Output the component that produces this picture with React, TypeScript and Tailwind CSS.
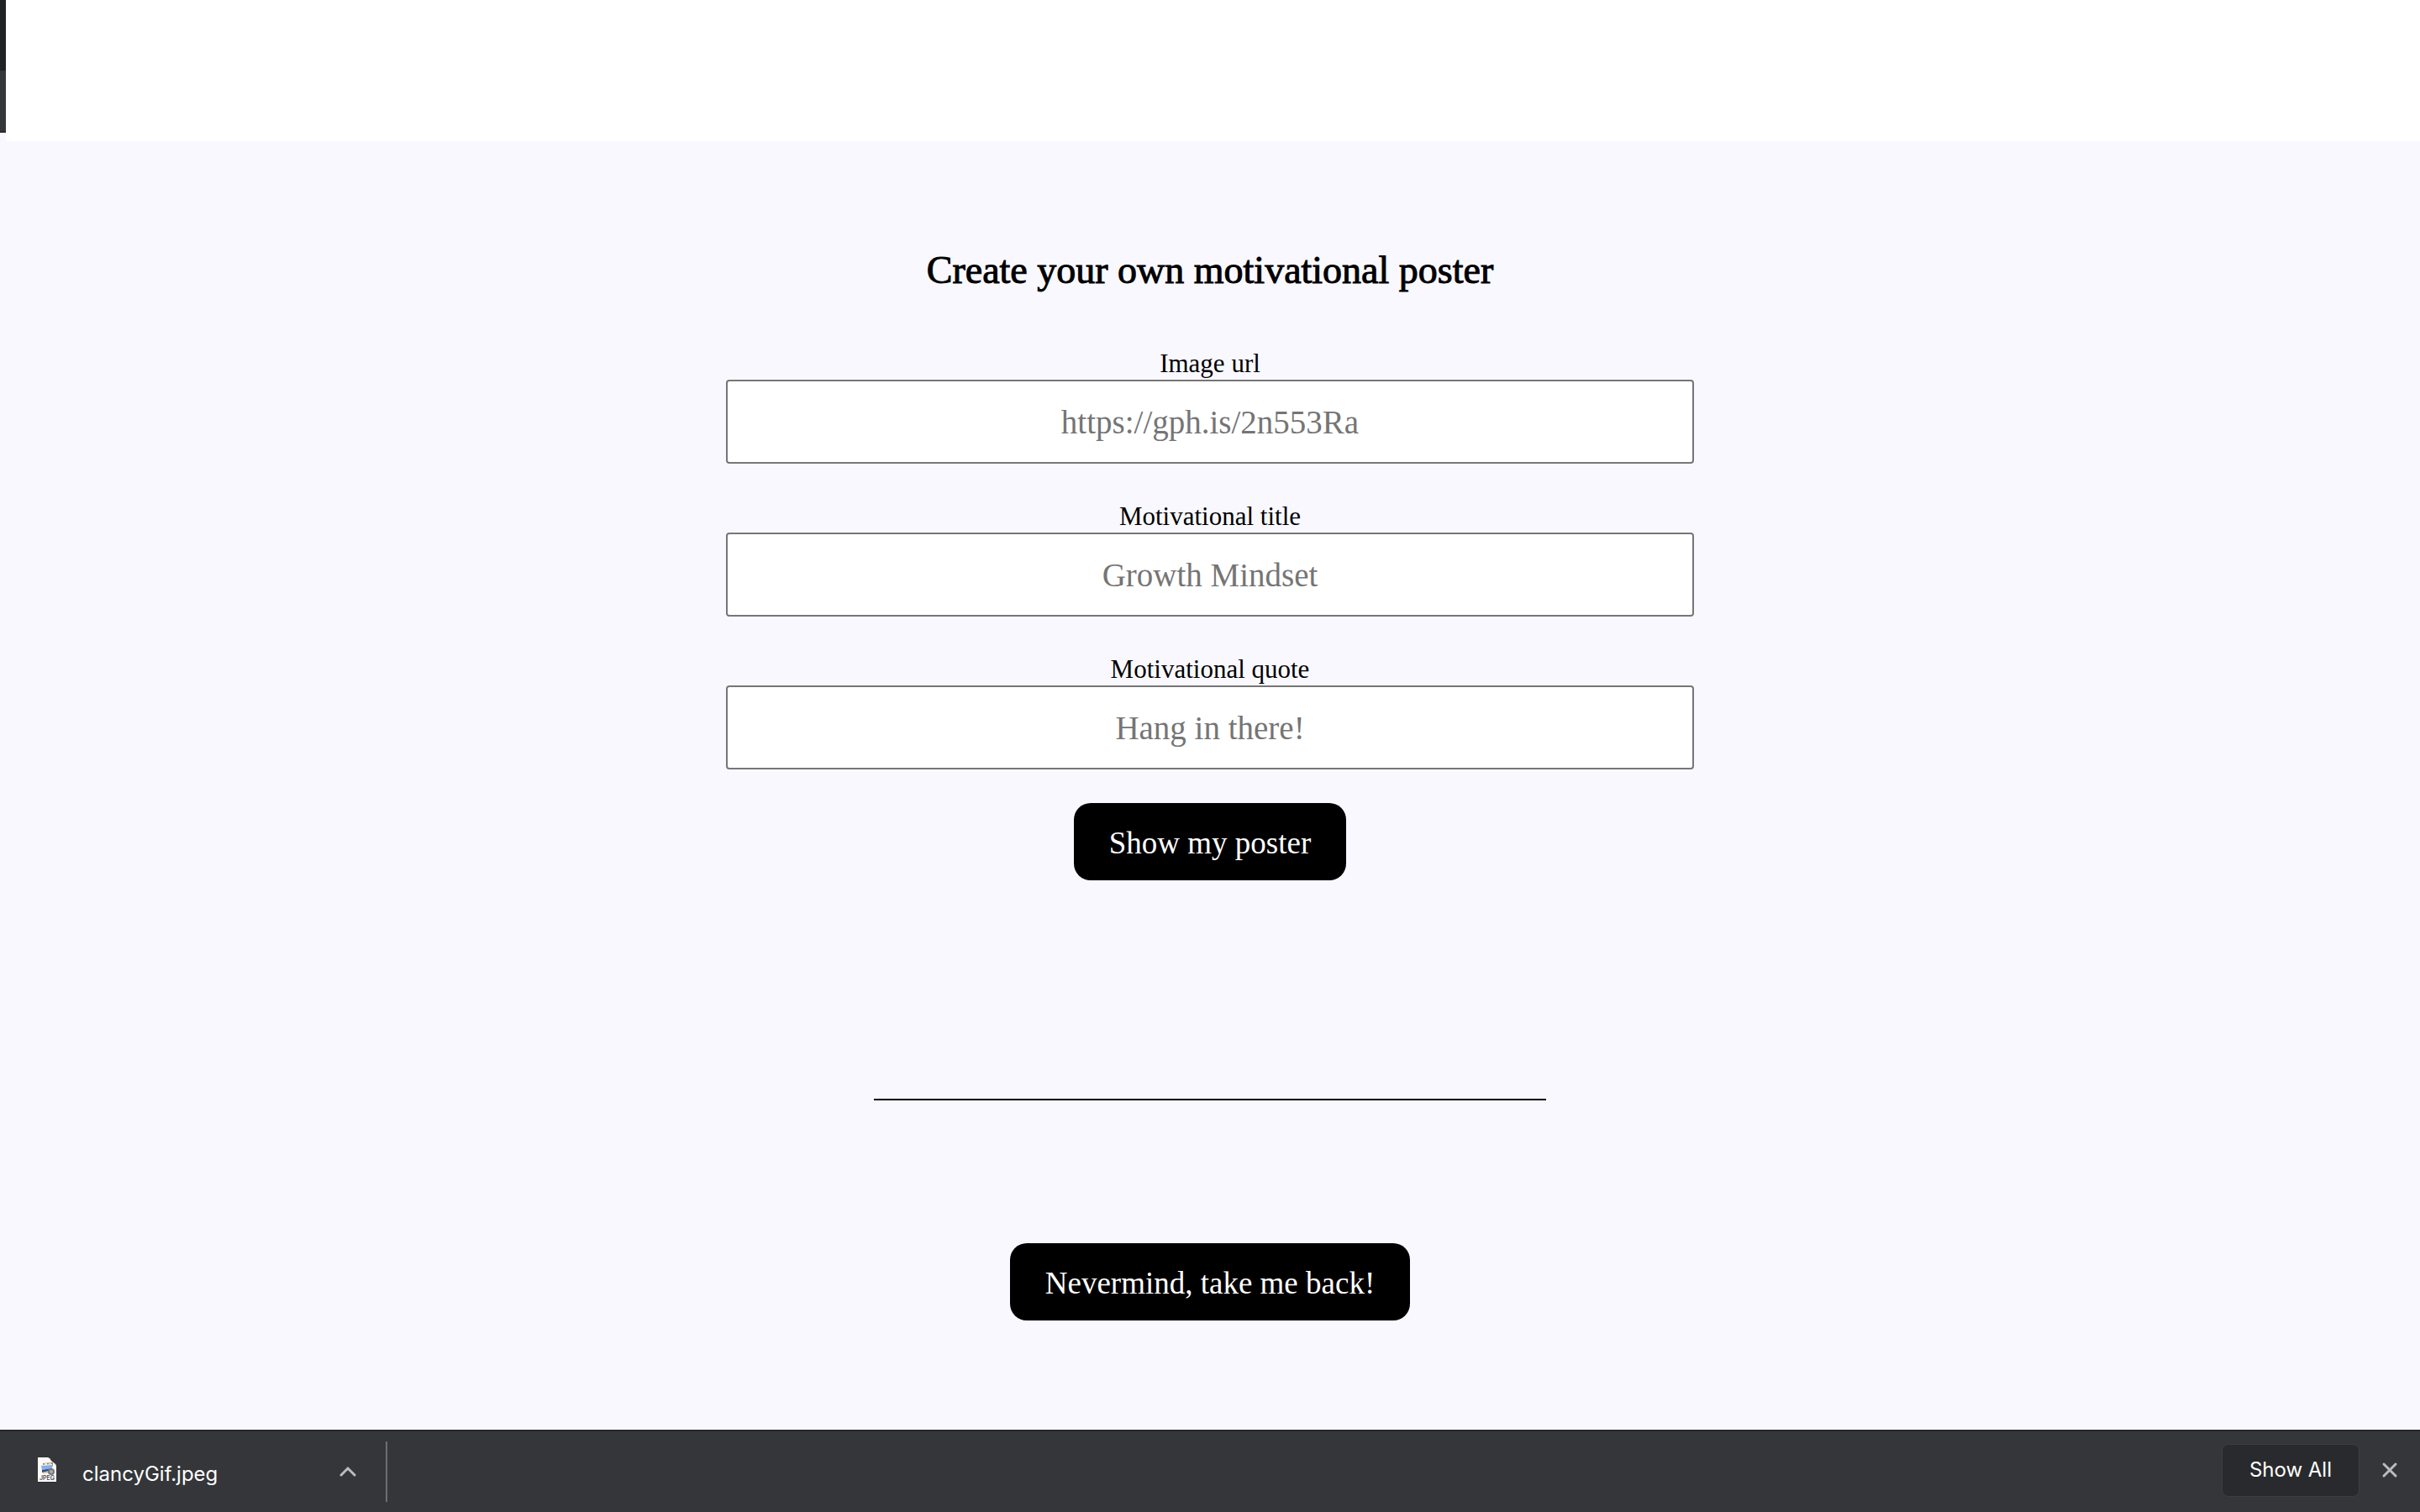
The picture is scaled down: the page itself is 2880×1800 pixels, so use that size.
import React from "react";

const fields = [
  { id: "image-url", label: "Image url", placeholder: "https://gph.is/2n553Ra", type: "url" },
  { id: "poster-title", label: "Motivational title", placeholder: "Growth Mindset", type: "text" },
  { id: "poster-quote", label: "Motivational quote", placeholder: "Hang in there!", type: "text" },
];

function Field({ id, label, placeholder, type }: (typeof fields)[number]) {
  return (
    <div className="flex w-full flex-col items-center">
      <label htmlFor={id} className="pt-[3px] text-[31px] leading-[39px]">
        {label}
      </label>
      <input
        id={id}
        type={type}
        placeholder={placeholder}
        className="h-[100px] w-full rounded-[4px] border-2 border-[#767676] bg-white text-center text-[39px] placeholder:text-[#757575]"
      />
    </div>
  );
}

function PosterButton({ children, type = "button" }: { children: React.ReactNode; type?: "button" | "submit" }) {
  return (
    <button type={type} className="rounded-[20px] bg-black px-[42px] pt-6 pb-5 text-[37px] leading-[48px] text-white">
      {children}
    </button>
  );
}

function JpegIcon() {
  return (
    <svg width="24" height="32" viewBox="0 0 24 32" aria-hidden="true">
      <path d="M1 1h13l9 9v20H1z" fill="#1d1e20" opacity="0.5" transform="translate(0 1)" />
      <path d="M1 1h12q3 1 4 4l5 4q1 1 1 3v18H1z" fill="#fbfbfb" />
      <path d="M13 1q3 1 4 5q4 1 6 5z" fill="#d5d5d5" />
      <path d="M7 8l12-1v5H7z" fill="#a98254" />
      <path d="M9 8h3v2H9zM14 8h3v1h-3z" fill="#e8dfd2" />
      <path d="M4 10l14-1 1 9-13 3z" fill="#f4f6f8" />
      <path d="M5 11l13-1v4L6 16z" fill="#86aee8" />
      <path d="M6 16l12-2v2L6 19z" fill="#2c4c84" />
      <path d="M7 19l9-2v2l-9 1z" fill="#c8b58c" />
      <circle cx="17" cy="18" r="4" fill="#77787a" />
      <circle cx="17" cy="18" r="2" fill="#a9b0b6" />
      <text x="12" y="28" textAnchor="middle" fontFamily="Inter, sans-serif" fontSize="7" fontWeight="600" fill="#4a4a4a">
        JPEG
      </text>
    </svg>
  );
}

function DownloadBar() {
  return (
    <footer className="flex h-[98px] items-center border-t-2 border-[#28282b] bg-[#35363a] pr-6 font-['Inter',sans-serif] text-white">
      <div className="flex h-[72px] w-[461px] items-center border-r-2 border-[#6d6e71] pr-[35px] pl-11">
        <span className="pb-1">
          <JpegIcon />
        </span>
        <a href="#" className="pt-[6px] pl-[30px] text-[24px] leading-8">
          clancyGif.jpeg
        </a>
        <button type="button" aria-label="Download options" className="ml-auto">
          <svg width="20" height="14" viewBox="0 0 20 14" fill="none" stroke="#bcbcbd" strokeWidth="3" strokeLinecap="round">
            <path d="M2 11l8-8 8 8" />
          </svg>
        </button>
      </div>
      <div className="ml-auto flex items-center gap-6 pb-1">
        <button
          type="button"
          className="h-[63px] rounded-lg border border-[#3d3e42] bg-[#292a2d] px-8 text-[24px] leading-8"
        >
          Show All
        </button>
        <button type="button" aria-label="Close downloads">
          <svg width="24" height="24" viewBox="0 0 24 24" fill="none" stroke="#bcbcbd" strokeWidth="3" strokeLinecap="round">
            <path d="M5 5l14 14M19 5L5 19" />
          </svg>
        </button>
      </div>
    </footer>
  );
}

export default function App() {
  return (
    <div className="flex min-h-screen flex-col bg-[#f9f8ff] font-['Liberation_Serif',serif] text-black">
      <header className="flex h-[168px]">
        <div className="flex h-[158px] w-[7px] flex-col bg-[#202124]">
          <div className="mt-auto h-[74px] border-b-2 border-[#28292b] bg-[#35363a]" />
        </div>
        <div className="flex-1 bg-white" />
      </header>

      <main className="flex flex-1 flex-col items-center pt-[124px]">
        <h1 className="text-[46px] leading-[60px] [-webkit-text-stroke:1px_black]">Create your own motivational poster</h1>
        <form className="mt-[58px] flex w-2/5 flex-col items-center gap-10">
          {fields.map((field) => (
            <Field key={field.id} {...field} />
          ))}
          <PosterButton type="submit">Show my poster</PosterButton>
        </form>
        <hr className="mt-[260px] mb-[170px] h-[2px] w-[800px] border-0 bg-black" />
        <PosterButton>Nevermind, take me back!</PosterButton>
      </main>

      <DownloadBar />
    </div>
  );
}
